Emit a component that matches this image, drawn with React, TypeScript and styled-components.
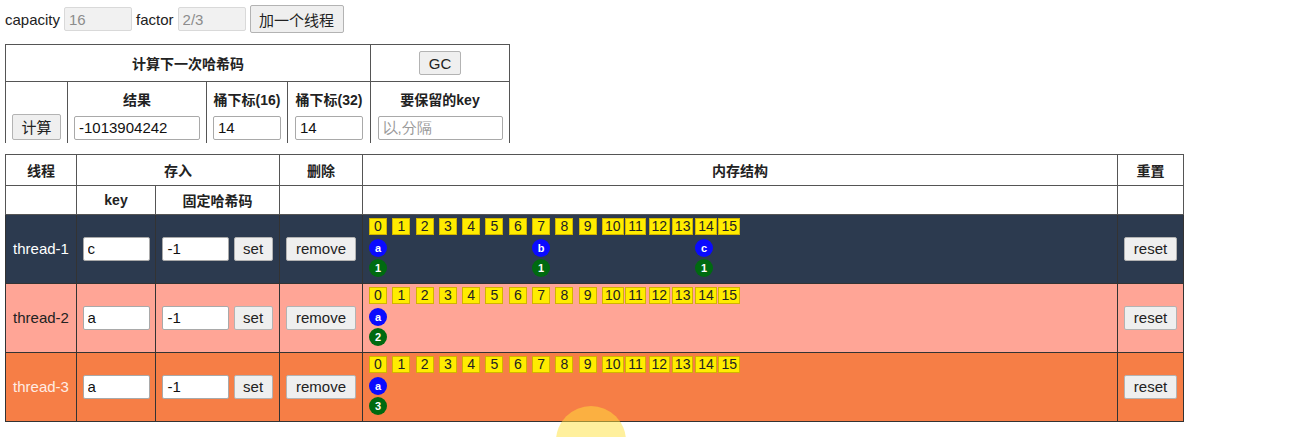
import styled, { createGlobalStyle } from 'styled-components'

const GlobalStyle = createGlobalStyle`
	body {
		margin: 0;
		background: #fff;
		font-family: "Liberation Sans", "Noto Sans CJK SC", sans-serif;
		font-size: 15px;
		color: #222;
	}
`

const Page = styled.div`
	position: relative;
	box-sizing: border-box;
	width: 1312px;
	height: 437px;
	padding: 5px;
	overflow: hidden;
`

const TopBar = styled.div`
	display: flex;
	align-items: center;
	gap: 4px;
	height: 28px;
	margin-bottom: 11px;
`

const ConfigInput = styled.input`
	box-sizing: border-box;
	width: 68px;
	height: 24px;
	padding: 1px 4px;
	border: 1px solid #d9d9d9;
	border-radius: 2px;
	background: #f1f1f1;
	color: #8c8c8c;
	font: 15px "Liberation Sans", sans-serif;
`

const Field = styled.input<{ $w: number }>`
	box-sizing: border-box;
	width: ${p => p.$w}px;
	height: 24px;
	padding: 1px 4px;
	border: 1px solid #a9a9a9;
	border-radius: 2px;
	background: #fff;
	color: #111;
	font: 15px "Liberation Sans", sans-serif;
	vertical-align: middle;

	&::placeholder {
		color: #9a9a9a;
	}
`

const Button = styled.button<{ $h?: number }>`
	box-sizing: border-box;
	height: ${p => p.$h ?? 24}px;
	padding: 0 8.5px;
	border: 1px solid #b3b3b3;
	border-radius: 2px;
	background: #efefef;
	color: #222;
	font: 15px "Liberation Sans", "Noto Sans CJK SC", sans-serif;
	vertical-align: middle;
	cursor: pointer;
`

const Table = styled.table<{ $w: number }>`
	border-collapse: collapse;
	table-layout: fixed;
	width: ${p => p.$w}px;
	margin-bottom: 11px;
`

const HeadCell = styled.th<{ $open?: boolean }>`
	border: 1px solid #555;
	border-bottom: ${p => (p.$open ? 'none' : '1px solid #555')};
	padding: 0;
	font-size: 14px;
	font-weight: bold;
	color: #222;
	text-align: center;
	vertical-align: middle;
`

const CalcCell = styled.td`
	border: 1px solid #555;
	border-bottom: none;
	padding: 0 0 3px;
	text-align: center;
	vertical-align: bottom;
`

const CalcLabel = styled.div`
	font-size: 14px;
	font-weight: bold;
	margin-bottom: 7px;
`

const ThreadRow = styled.tr<{ $bg: string; $fg: string }>`
	height: 69px;
	background: ${p => p.$bg};
	color: ${p => p.$fg};
`

const Cell = styled.td`
	border: 1px solid #333;
	padding: 0;
	text-align: center;
	vertical-align: middle;
	white-space: nowrap;
`

const MemoryCell = styled.td`
	border: 1px solid #333;
	padding: 3px 0 0 6px;
	vertical-align: top;
`

const Buckets = styled.div`
	display: flex;
`

const BucketColumn = styled.div`
	display: flex;
	flex-direction: column;
	align-items: flex-start;
	width: 23.3px;
	flex-shrink: 0;
`

const Slot = styled.div`
	box-sizing: border-box;
	min-width: 18px;
	height: 17px;
	padding: 0 2px;
	border: 1px solid #d2b400;
	background: #ffec00;
	color: #222;
	font-size: 14px;
	line-height: 15px;
	text-align: center;
`

const Dot = styled.div<{ $bg: string; $gap: number }>`
	width: 18px;
	height: 18px;
	margin-top: ${p => p.$gap}px;
	border-radius: 50%;
	background: ${p => p.$bg};
	color: #fff;
	font-size: 11px;
	font-weight: bold;
	line-height: 18px;
	text-align: center;
`

const CursorHalo = styled.div`
	position: absolute;
	left: 556px;
	top: 406px;
	width: 70px;
	height: 70px;
	border-radius: 50%;
	background: rgba(255, 226, 60, 0.5);
	pointer-events: none;
`

type Thread = {
	name: string
	key: string
	bg: string
	fg: string
	entries: Record<number, [string, number]>
}

const threads: Thread[] = [
	{
		name: 'thread-1',
		key: 'c',
		bg: '#2c3a4f',
		fg: '#fff',
		entries: { 0: ['a', 1], 7: ['b', 1], 14: ['c', 1] },
	},
	{ name: 'thread-2', key: 'a', bg: '#ffa596', fg: '#222', entries: { 0: ['a', 2] } },
	{ name: 'thread-3', key: 'a', bg: '#f67e46', fg: '#ffece4', entries: { 0: ['a', 3] } },
]

const slots = Array.from({ length: 16 }, (_, i) => i)

function Memory({ entries }: { entries: Thread['entries'] }) {
	return (
		<Buckets>
			{slots.map(i => (
				<BucketColumn key={i}>
					<Slot>{i}</Slot>
					{entries[i] && (
						<>
							<Dot $bg="#0a0aff" $gap={4}>
								{entries[i][0]}
							</Dot>
							<Dot $bg="#006a10" $gap={2}>
								{entries[i][1]}
							</Dot>
						</>
					)}
				</BucketColumn>
			))}
		</Buckets>
	)
}

export default function App() {
	return (
		<Page>
			<GlobalStyle />
			<TopBar>
				capacity <ConfigInput readOnly defaultValue="16" />
				factor <ConfigInput readOnly defaultValue="2/3" />
				<Button $h={28}>加一个线程</Button>
			</TopBar>

			<Table $w={504}>
				<colgroup>
					<col style={{ width: 62 }} />
					<col style={{ width: 139 }} />
					<col style={{ width: 81 }} />
					<col style={{ width: 83 }} />
					<col style={{ width: 139 }} />
				</colgroup>
				<tbody>
					<tr style={{ height: 37 }}>
						<HeadCell colSpan={4}>计算下一次哈希码</HeadCell>
						<HeadCell>
							<Button>GC</Button>
						</HeadCell>
					</tr>
					<tr style={{ height: 61 }}>
						<CalcCell>
							<Button $h={26}>计算</Button>
						</CalcCell>
						<CalcCell>
							<CalcLabel>结果</CalcLabel>
							<Field $w={126} readOnly defaultValue="-1013904242" />
						</CalcCell>
						<CalcCell>
							<CalcLabel>桶下标(16)</CalcLabel>
							<Field $w={68} readOnly defaultValue="14" />
						</CalcCell>
						<CalcCell>
							<CalcLabel>桶下标(32)</CalcLabel>
							<Field $w={68} readOnly defaultValue="14" />
						</CalcCell>
						<CalcCell>
							<CalcLabel>要保留的key</CalcLabel>
							<Field $w={125} placeholder="以,分隔" />
						</CalcCell>
					</tr>
				</tbody>
			</Table>

			<Table $w={1178}>
				<colgroup>
					<col style={{ width: 71 }} />
					<col style={{ width: 79 }} />
					<col style={{ width: 124 }} />
					<col style={{ width: 83 }} />
					<col style={{ width: 755 }} />
					<col style={{ width: 66 }} />
				</colgroup>
				<thead>
					<tr style={{ height: 31 }}>
						<HeadCell>线程</HeadCell>
						<HeadCell colSpan={2}>存入</HeadCell>
						<HeadCell>删除</HeadCell>
						<HeadCell>内存结构</HeadCell>
						<HeadCell>重置</HeadCell>
					</tr>
					<tr style={{ height: 29 }}>
						<HeadCell />
						<HeadCell>key</HeadCell>
						<HeadCell>固定哈希码</HeadCell>
						<HeadCell />
						<HeadCell />
						<HeadCell />
					</tr>
				</thead>
				<tbody>
					{threads.map(t => (
						<ThreadRow key={t.name} $bg={t.bg} $fg={t.fg}>
							<Cell>{t.name}</Cell>
							<Cell>
								<Field $w={67} defaultValue={t.key} />
							</Cell>
							<Cell>
								<Field $w={67} defaultValue="-1" /> <Button>set</Button>
							</Cell>
							<Cell>
								<Button>remove</Button>
							</Cell>
							<MemoryCell>
								<Memory entries={t.entries} />
							</MemoryCell>
							<Cell>
								<Button>reset</Button>
							</Cell>
						</ThreadRow>
					))}
				</tbody>
			</Table>

			<CursorHalo />
		</Page>
	)
}
